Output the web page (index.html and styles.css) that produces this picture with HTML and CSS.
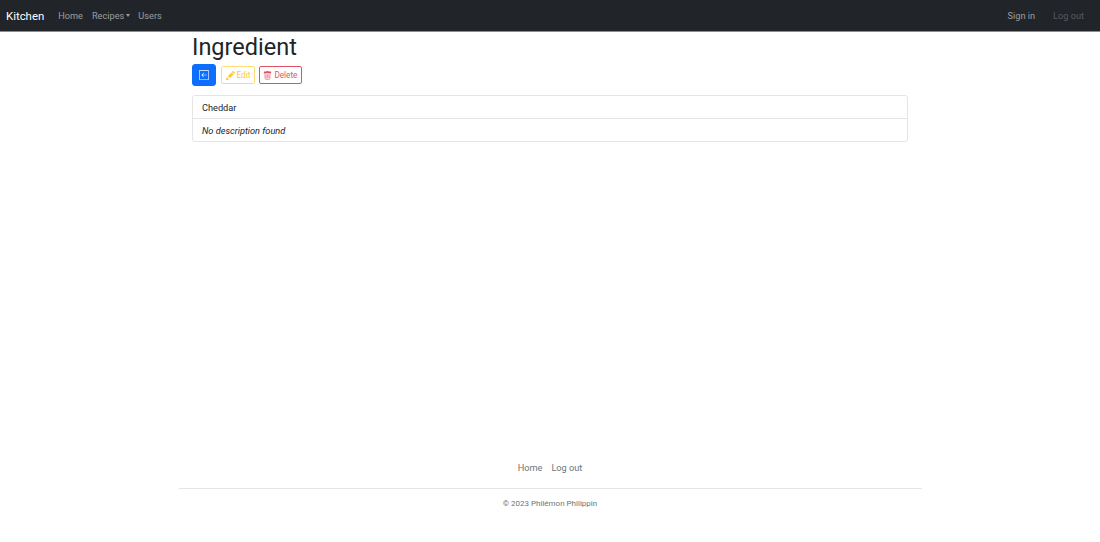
FILE: index.html
```html
<!DOCTYPE html>
<html lang="en">
<head>
    <meta charset="UTF-8">
    <title>Ingredient</title>
    <link rel="stylesheet" href="styles.css">
</head>
<body>

    <nav class="navbar">
        <a class="brand" href="#">Kitchen</a>
        <a class="nav-link" href="#">Home</a>
        <a class="nav-link dropdown" href="#">Recipes</a>
        <a class="nav-link" href="#">Users</a>
        <div class="nav-right">
            <a class="nav-link sign-in" href="#">Sign in</a>
            <a class="nav-link disabled" href="#">Log out</a>
        </div>
    </nav>

    <main class="container">
        <h1>Ingredient</h1>
        <div class="actions">
            <a class="btn btn-back" href="#">
                <svg class="icon" viewBox="0 0 16 16" fill="currentColor">
                    <path d="M14 1a1 1 0 0 1 1 1v12a1 1 0 0 1-1 1H2a1 1 0 0 1-1-1V2a1 1 0 0 1 1-1h12zM2 0a2 2 0 0 0-2 2v12a2 2 0 0 0 2 2h12a2 2 0 0 0 2-2V2a2 2 0 0 0-2-2H2z"/>
                    <path d="M12 8.5a.5.5 0 0 0 0-1H5.7l2.15-2.15a.5.5 0 1 0-.7-.7l-3 3a.5.5 0 0 0 0 .7l3 3a.5.5 0 0 0 .7-.7L5.7 8.5H12z"/>
                </svg>
            </a>
            <a class="btn btn-edit" href="#">
                <svg class="icon" viewBox="0 0 16 16" fill="currentColor">
                    <path d="M12.85.15a.5.5 0 0 0-.7 0L10.5 1.8l3.7 3.7 1.65-1.65a.5.5 0 0 0 0-.7l-3-3zM13.5 6.2 9.8 2.5 3.3 9h.2a.5.5 0 0 1 .5.5v.5h.5a.5.5 0 0 1 .5.5v.5h.5a.5.5 0 0 1 .5.5v.5h.5a.5.5 0 0 1 .5.5v.2l6.5-6.5zM5.03 14.4A.5.5 0 0 1 5 14.2V14h-.5a.5.5 0 0 1-.5-.5V13h-.5a.5.5 0 0 1-.5-.5V12h-.5a.5.5 0 0 1-.5-.5V11h-.2a.5.5 0 0 1-.18-.03l-.18.18a.5.5 0 0 0-.11.17l-2 5a.5.5 0 0 0 .65.65l5-2a.5.5 0 0 0 .17-.11l.18-.18z"/>
                </svg>
                Edit
            </a>
            <a class="btn btn-delete" href="#">
                <svg class="icon" viewBox="0 0 16 16" fill="currentColor">
                    <path d="M2.5 1a1 1 0 0 0-1 1v1a1 1 0 0 0 1 1H3v9a2 2 0 0 0 2 2h6a2 2 0 0 0 2-2V4h.5a1 1 0 0 0 1-1V2a1 1 0 0 0-1-1H10a1 1 0 0 0-1-1H7a1 1 0 0 0-1 1H2.5zM4 4h8v9a1 1 0 0 1-1 1H5a1 1 0 0 1-1-1V4zm1.5 1.5a.5.5 0 0 1 .5.5v7a.5.5 0 0 1-1 0V6a.5.5 0 0 1 .5-.5zm2.5 0a.5.5 0 0 1 .5.5v7a.5.5 0 0 1-1 0V6a.5.5 0 0 1 .5-.5zm3 .5v7a.5.5 0 0 1-1 0V6a.5.5 0 0 1 1 0z" fill-rule="evenodd"/>
                </svg>
                Delete
            </a>
        </div>
        <ul class="list-group">
            <li class="list-item">Cheddar</li>
            <li class="list-item description">No description found</li>
        </ul>
    </main>

    <footer class="footer">
        <div class="footer-links">
            <a href="#">Home</a>
            <a href="#">Log out</a>
        </div>
        <p class="copyright">© 2023 Philémon Philippin</p>
    </footer>

</body>
</html>
```

FILE: styles.css
```css
html, body {
    height: 100%;
}
body {
    font-family: Roboto, 'Open Sans', sans-serif;
    font-size: 9.2px;
    color: #212529;
    background-color: #fff;
    margin: 0;
    display: flex;
    flex-direction: column;
}
a {
    text-decoration: none;
}
.navbar {
    background-color: #212529;
    height: 32px;
    display: flex;
    align-items: center;
    padding: 0 16px 0 6px;
    box-sizing: border-box;
    border-bottom: 1px solid #8a8d90;
}
.brand {
    color: #fff;
    font-size: 11.4px;
    margin-right: 14px;
}
.nav-link {
    color: rgba(255,255,255,0.55);
    margin-right: 9px;
}
.dropdown {
    margin-right: 8px;
}
.dropdown::after {
    content: "";
    display: inline-block;
    margin-left: 2px;
    vertical-align: 2px;
    border-top: 3px solid;
    border-left: 2.5px solid transparent;
    border-right: 2.5px solid transparent;
}
.nav-right {
    margin-left: auto;
    display: flex;
}
.nav-right .nav-link {
    margin: 0 0 0 18px;
}
.disabled {
    color: rgba(255,255,255,0.25);
}
.container {
    width: 716px;
    margin: 0 auto;
    flex: 1;
}
h1 {
    font-size: 23.5px;
    font-weight: 400;
    line-height: 29px;
    margin: 1px 0 2px;
}
.actions {
    display: flex;
    align-items: center;
    gap: 4px;
    margin-bottom: 9px;
}
.btn {
    display: flex;
    align-items: center;
    gap: 2px;
    box-sizing: border-box;
    font-size: 8.2px;
    height: 18px;
    padding: 0 3.5px;
    border: 1px solid;
    border-radius: 2px;
}
.icon {
    width: 9px;
    height: 9px;
}
.btn-back {
    background-color: #0d6efd;
    border-color: #0d6efd;
    color: #fff;
    width: 24px;
    height: 22px;
    justify-content: center;
    border-radius: 3px;
    margin-right: 1px;
}
.btn-back .icon {
    width: 10px;
    height: 10px;
}
.btn-edit {
    color: #ffc107;
    border-color: #ffd75e;
    opacity: 0.85;
}
.btn-delete {
    color: #dc3545;
    border-color: #dc3545;
    opacity: 0.85;
}
.list-group {
    list-style: none;
    margin: 0;
    padding: 0;
    border: 1px solid #e4e5e6;
    border-radius: 3px;
}
.list-item {
    padding: 0 9px;
    height: 22px;
    line-height: 24px;
}
.list-item + .list-item {
    border-top: 1px solid #e4e5e6;
}
.description {
    font-style: italic;
}
.footer {
    width: 743px;
    margin: 0 auto;
    height: 85px;
    flex-shrink: 0;
    text-align: center;
    color: #6c757d;
}
.footer-links {
    display: flex;
    justify-content: center;
    gap: 9px;
    height: 32px;
    padding-top: 5px;
    box-sizing: border-box;
    border-bottom: 1px solid #e4e5e6;
}
.footer-links a {
    color: #6c757d;
}
.copyright {
    font-size: 8px;
    margin: 10px 0 0;
}
```
